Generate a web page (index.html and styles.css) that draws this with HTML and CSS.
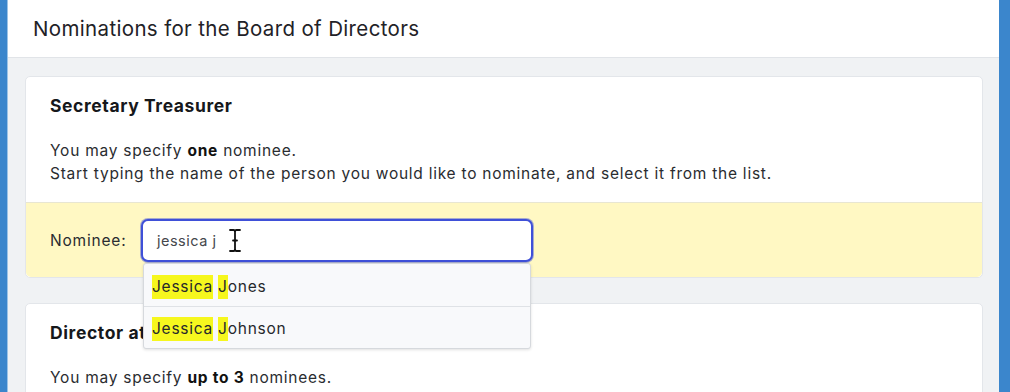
FILE: index.html
```html
<!DOCTYPE html>
<html lang="en">
<head>
<meta charset="utf-8">
<title>Nominations</title>
<link rel="stylesheet" href="styles.css">
</head>
<body>
<div class="frame">
  <main class="page">
    <header class="page-header">
      <h1 class="page-title">Nominations for the Board of Directors</h1>
    </header>
    <section class="content">
      <div class="card">
        <div class="card-body">
          <h2 class="card-title">Secretary Treasurer</h2>
          <p class="card-text">You may specify <strong>one</strong> nominee.<br>Start typing the name of the person you would like to nominate, and select it from the list.</p>
        </div>
        <div class="card-footer">
          <label class="field-label" for="nominee">Nominee:</label>
          <div class="combo">
            <div class="combo-input" id="nominee">jessica j</div>
            <svg class="cursor" width="14" height="25" viewBox="0 0 14 25" aria-hidden="true">
              <path d="M2 2 H5.5 Q7 2 7 4 Q7 2 8.5 2 H12 M7 4 V21 Q7 23 5.5 23 H2 M7 21 Q7 23 8.5 23 H12 M5 12.5 H9" fill="none" stroke="#fff" stroke-width="4.2" stroke-linecap="round" stroke-linejoin="round"/>
              <path d="M2 2 H5.5 Q7 2 7 4 Q7 2 8.5 2 H12 M7 4 V21 Q7 23 5.5 23 H2 M7 21 Q7 23 8.5 23 H12 M5 12.5 H9" fill="none" stroke="#111" stroke-width="1.8" stroke-linecap="round" stroke-linejoin="round"/>
            </svg>
            <ul class="suggestions">
              <li class="suggestion"><span><mark>Jessica</mark> <mark>J</mark>ones</span></li>
              <li class="suggestion"><span><mark>Jessica</mark> <mark>J</mark>ohnson</span></li>
            </ul>
          </div>
        </div>
      </div>
      <div class="card">
        <div class="card-body">
          <h2 class="card-title">Director at Large</h2>
          <p class="card-text">You may specify <strong>up to 3</strong> nominees.</p>
        </div>
      </div>
    </section>
  </main>
</div>
</body>
</html>
```
FILE: styles.css
```css
* { box-sizing: border-box; }
html, body { margin: 0; padding: 0; height: 100%; }
body {
  background: #3b86cc;
  font-family: "Inter", "Noto Sans", sans-serif;
  color: #222;
  overflow: hidden;
}
.frame {
  display: flex;
  height: 100%;
  padding: 0 11px 0 7px;
}
.page {
  flex: 1;
  background: #f0f2f4;
  border-left: 1px solid #9cc3e6;
  display: flex;
  flex-direction: column;
  overflow: hidden;
}
.page-header {
  flex-shrink: 0;
  background: #fff;
  height: 58px;
  border-bottom: 1px solid #e1e4e8;
  display: flex;
  align-items: center;
  padding-left: 25px;
}
.page-title {
  margin: 0;
  font-size: 20.5px;
  font-weight: 400;
  letter-spacing: 0.35px;
  color: #1f2227;
}
.content {
  flex-shrink: 0;
  padding: 18px 16px 0 17px;
  display: flex;
  flex-direction: column;
  gap: 25px;
}
.card {
  background: #fff;
  border: 1px solid #e3e6ea;
  border-radius: 5px;
}
.card-body {
  padding: 17px 24px 17px;
}
.card-title {
  margin: 0;
  font-size: 17.5px;
  font-weight: 700;
  color: #16181b;
  line-height: 24px;
  letter-spacing: 0.6px;
}
.card-text {
  margin: 21px 0 0;
  font-size: 15.5px;
  line-height: 23px;
  letter-spacing: 0.75px;
  color: #2a2c30;
}
.card-text strong { font-weight: 700; color: #111; }
.card-footer {
  background: #fff8c3;
  border-top: 1px solid #e8e6d2;
  border-radius: 0 0 5px 5px;
  height: 75px;
  display: flex;
  align-items: center;
  padding-left: 24px;
}
.field-label {
  font-size: 15.5px;
  letter-spacing: 0.8px;
  color: #2a2c30;
  width: 91px;
}
.combo {
  position: relative;
  width: 392px;
}
.combo-input {
  height: 43px;
  border: 2px solid #3f50d8;
  border-radius: 7px;
  box-shadow: 0 0 0 1px rgba(63, 80, 216, 0.45);
  background: #fff;
  display: flex;
  align-items: center;
  padding-left: 14px;
  font-size: 14.5px;
  letter-spacing: 0.5px;
  color: #45474c;
}
.cursor {
  position: absolute;
  left: 87px;
  top: 9px;
}
.suggestions {
  position: absolute;
  top: 44px;
  left: 2px;
  right: 2px;
  margin: 0;
  padding: 0;
  list-style: none;
  background: #f8f9fb;
  border: 1px solid #d6d9dd;
  border-radius: 3px;
  box-shadow: 0 1px 3px rgba(0,0,0,0.12);
  z-index: 2;
}
.suggestion {
  height: 42px;
  display: flex;
  align-items: center;
  padding: 3px 0 0 8px;
  font-size: 15.5px;
  letter-spacing: 0.75px;
  color: #26282c;
}
.suggestion + .suggestion { border-top: 1px solid #dfe2e6; }
.suggestion mark {
  background: #f6f71e;
  color: #26282c;
  padding: 2px 0 3px;
}
```
